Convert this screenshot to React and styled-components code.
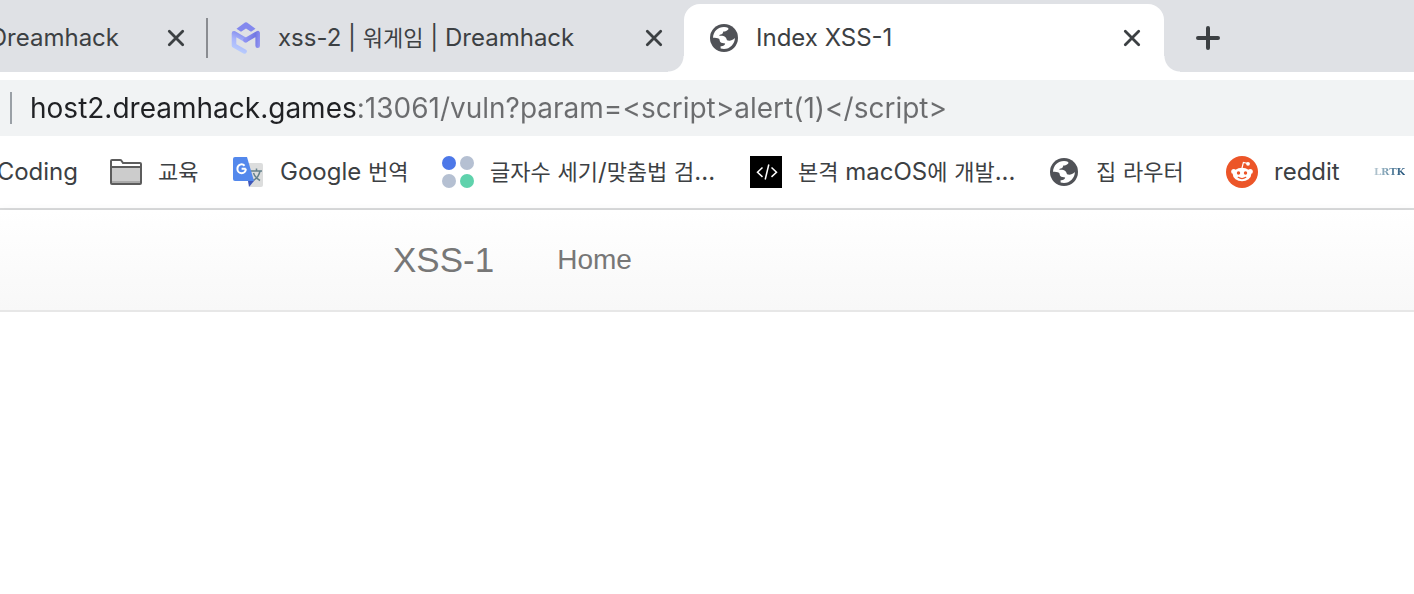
import React from "react";
import styled, { createGlobalStyle } from "styled-components";

const GlobalStyle = createGlobalStyle`
  *, *::before, *::after { box-sizing: border-box; }
  body {
    margin: 0;
    background: #fff;
    color: #3c4043;
    font-family: Inter, "Noto Sans CJK KR", sans-serif;
    font-size: 24px;
  }
  button, input { font: inherit; }
  a { color: inherit; text-decoration: none; }
`;

const Window = styled.div`
  overflow-x: clip;
`;

const TabStrip = styled.div`
  display: flex;
  height: 72px;
  padding-top: 4px;
  background: #dfe1e5;
`;

const Tab = styled.div`
  position: relative;
  display: flex;
  align-items: center;
  flex: 0 0 ${(p) => p.$width}px;
  min-width: 0;
  gap: 16px;
  padding: 0 ${(p) => (p.$active ? 20 : 18)}px 0 ${(p) => (p.$cut ? 0 : 24)}px;
  background: ${(p) => (p.$active ? "#fff" : "transparent")};
  border-radius: 16px 16px 0 0;

  ${(p) =>
    p.$active &&
    `
    &::before, &::after {
      content: "";
      position: absolute;
      bottom: 0;
      width: 16px;
      height: 16px;
    }
    &::before {
      right: 100%;
      background: radial-gradient(circle at 0 0, transparent 15px, #fff 16px);
    }
    &::after {
      left: 100%;
      background: radial-gradient(circle at 100% 0, transparent 15px, #fff 16px);
    }
  `}
`;

const Divider = styled.span`
  position: absolute;
  left: 0;
  width: 2px;
  height: 40px;
  background: #8a8c91;
`;

const TabTitle = styled.span`
  display: flex;
  flex: 1;
  min-width: 0;
  justify-content: ${(p) => (p.$cut ? "flex-end" : "flex-start")};
  padding-right: ${(p) => (p.$cut ? 29 : 0)}px;
  overflow: hidden;
  white-space: pre;
  line-height: 32px;
`;

const Hangul = styled.span`
  font-size: 22px;
`;

const IconButton = styled.button`
  display: flex;
  flex: none;
  align-items: center;
  justify-content: center;
  width: ${(p) => p.$size}px;
  height: ${(p) => p.$size}px;
  padding: 0;
  border: 0;
  background: none;
  color: #3c4043;
`;

const NewTabArea = styled.div`
  display: flex;
  align-items: center;
  padding-left: 28px;
`;

const AddressRow = styled.form`
  display: flex;
  align-items: center;
  height: 56px;
  margin-top: 8px;
  padding-left: 10px;
  background: #f1f3f4;
`;

const AddressRule = styled.span`
  width: 2px;
  height: 32px;
  margin-right: 18px;
  background: #9aa0a6;
`;

const AddressInput = styled.input`
  flex: 1;
  min-width: 0;
  height: 40px;
  padding: 0;
  border: 0;
  outline: 0;
  font-size: 28px;
  color: #5f6368;
  -webkit-text-fill-color: transparent;
  background: linear-gradient(to right, #202124 327px, #6b6c6e 327px);
  -webkit-background-clip: text;
  background-clip: text;
`;

const BookmarkBar = styled.nav`
  display: flex;
  align-items: center;
  gap: 32px;
  height: 74px;
  border-bottom: 2px solid #dadbdc;
`;

const Bookmark = styled.a`
  display: flex;
  flex: none;
  align-items: center;
  gap: 16px;
`;

const BookmarkLabel = styled.span`
  display: flex;
  width: ${(p) => p.$width}px;
  justify-content: ${(p) => (p.$cut ? "flex-end" : "flex-start")};
  white-space: pre;
  line-height: 32px;
`;

const SiteNav = styled.nav`
  display: flex;
  align-items: center;
  gap: 63px;
  height: 102px;
  padding-left: 393px;
  border-bottom: 2px solid #e7e7e7;
  background: linear-gradient(#fff, #f8f8f8);
  box-shadow: 0 2px 10px rgba(0, 0, 0, 0.075);
  color: #777;
  font-family: "Liberation Sans", Arial, sans-serif;
`;

const SiteLink = styled.a`
  font-size: ${(p) => (p.$brand ? 35 : 28)}px;
  line-height: 40px;
`;

const CloseIcon = () => (
  <svg width="18" height="18" viewBox="0 0 18 18" stroke="currentColor" strokeWidth="2.800" strokeLinecap="round" aria-hidden="true">
    <path d="M2.300 2.300l13.400 13.400M15.700 2.300l-13.400 13.400" />
  </svg>
);

const PlusIcon = () => (
  <svg width="24" height="24" viewBox="0 0 24 24" stroke="currentColor" strokeWidth="4" strokeLinecap="round" aria-hidden="true">
    <path d="M12 2v20M2 12h20" />
  </svg>
);

const GlobeIcon = () => (
  <svg width="32" height="32" viewBox="0 0 32 32" aria-hidden="true">
    <circle cx="16" cy="16" r="14" fill="#505257" />
    <path
      fill="#fff"
      d="M5 15.700C5.200 9.500 10 5 16 5c1.600 0 3 .3 4.300.9V7.500c-1.200 1.300-2.800 2-5 2.100-.3 1.500-.8 2.500-1.800 2.700-1.300.2-2 .5-2.200 1.500 2.600-.2 4.800.1 6.200 1.400.9.900 1.200 2 1.500 3.100 2.300.7 5.200.5 7.900-2.300C26.800 22 22 27 16 27c-1.200 0-2.400-.2-3.400-.5v-2.300c2.300.2 4.200-.6 4.600-2.700-1.600-.4-3.900-.2-4.900-1.500-.7-1-.4-2.300-1.300-3.300-1.500-.9-3.700-1-6-1z"
    />
  </svg>
);

const DreamhackIcon = () => (
  <svg width="32" height="32" viewBox="0 0 32 32" fill="none" aria-hidden="true">
    <defs>
      <linearGradient id="dhLeft" x1="16" y1="10" x2="8" y2="30" gradientUnits="userSpaceOnUse">
        <stop offset="0" stopColor="#7d84ea" />
        <stop offset=".5" stopColor="#a9b5fb" />
        <stop offset="1" stopColor="#b9cdfd" />
      </linearGradient>
      <linearGradient id="dhRight" x1="16" y1="18" x2="30" y2="20" gradientUnits="userSpaceOnUse">
        <stop offset="0" stopColor="#8d92f1" />
        <stop offset=".6" stopColor="#7177e2" />
        <stop offset="1" stopColor="#9496f2" />
      </linearGradient>
    </defs>
    <path d="M6.500 6.800L15 .6q1-.6 2 0l8.500 6.200-4.500 3-5-3.400-5 3.400z" fill="#8388ee" />
    <path d="M14.500 29.400L4 23.600V11.200l12 7" stroke="url(#dhLeft)" strokeWidth="4.600" strokeLinejoin="round" strokeLinecap="round" />
    <path d="M15.500 18.200l12.200-7v12.600" stroke="url(#dhRight)" strokeWidth="4.600" strokeLinejoin="round" strokeLinecap="round" />
  </svg>
);

const FolderIcon = () => (
  <svg width="32" height="32" viewBox="0 0 32 32" aria-hidden="true">
    <path d="M1 27V5q0-1 1-1h8q1 0 1.500.8L13 7h17q1 0 1 1v19q0 1-1 1H2q-1 0-1-1z" fill="#fff" stroke="#5c5c5c" strokeWidth="2" />
    <path d="M2 11h28v16H2z" fill="#ccc" />
    <path d="M2 25h28v2H2z" fill="#aaa" />
    <path d="M1 11h30" stroke="#5c5c5c" strokeWidth="2" />
  </svg>
);

const TranslateIcon = () => (
  <svg width="32" height="32" viewBox="0 0 32 32" aria-hidden="true">
    <path d="M11 7h18q2 0 2 2v20q0 2-2 2H18z" fill="#dcdddd" />
    <path d="M19 15h11M24.500 12.500V15M28 15c-1 5-4 8-7 9.500M21.500 17c1 3 4 6 6.500 7.500" stroke="#63808b" strokeWidth="1.500" fill="none" />
    <path d="M16 25h6l-5 6z" fill="#3f57ba" />
    <path d="M3 1h12l7 24H3q-2 0-2-2V3q0-2 2-2z" fill="#5388ec" />
    <path d="M13.800 12.700H9.600M13.800 12.700c.2 6.200-8.400 5.800-8.400.2 0-4.700 4.800-5.600 7.200-3.200" stroke="#fff" strokeWidth="2" fill="none" />
  </svg>
);

const DotsIcon = () => (
  <svg width="32" height="32" viewBox="0 0 32 32" aria-hidden="true">
    <circle cx="7" cy="7" r="7" fill="#4d78e8" />
    <circle cx="25" cy="7" r="7" fill="#b5c0d2" />
    <circle cx="7" cy="25" r="7" fill="#b5c0d2" />
    <circle cx="25" cy="25" r="7" fill="#5fd2ac" />
  </svg>
);

const CodeIcon = () => (
  <svg width="32" height="32" viewBox="0 0 32 32" aria-hidden="true">
    <path d="M0 0h32v32H0z" fill="#000" />
    <path d="M12.500 11.500L7.500 16.200l5 4.700M21.500 11.500l5 4.700-5 4.700M18.800 8.500l-3.600 15" stroke="#fff" strokeWidth="1.500" fill="none" />
  </svg>
);

const RedditIcon = () => (
  <svg width="32" height="32" viewBox="0 0 32 32" aria-hidden="true">
    <circle cx="16" cy="16" r="16" fill="#ec5528" />
    <path d="M16 12l1.400-5.600 4.600 1.100" stroke="#fff" strokeWidth="1.200" fill="none" />
    <circle cx="22" cy="7.800" r="1.900" fill="#fff" />
    <circle cx="7.700" cy="15.400" r="2.500" fill="#fff" />
    <circle cx="24.300" cy="15.400" r="2.500" fill="#fff" />
    <ellipse cx="16" cy="18.500" rx="9.200" ry="6.800" fill="#fff" />
    <circle cx="12.500" cy="17" r="1.700" fill="#ec5528" />
    <circle cx="19.500" cy="17" r="1.700" fill="#ec5528" />
    <path d="M12.200 21.300q3.800 2.500 7.600 0" stroke="#ec5528" strokeWidth="1.200" fill="none" strokeLinecap="round" />
  </svg>
);

const LrtkMark = styled.span`
  font: bold 10px/32px "DejaVu Serif", serif;
  background: linear-gradient(to right, #b9c9d2, #7d9fb3 40%, #1d4f78);
  -webkit-background-clip: text;
  background-clip: text;
  -webkit-text-fill-color: transparent;
`;

const tabs = [
  { title: "Dreamhack", width: 206, cut: true },
  { title: "xss-2 | 워게임 | Dreamhack", width: 478, icon: DreamhackIcon, divider: true },
  { title: "Index XSS-1", width: 480, icon: GlobeIcon, active: true },
];

const bookmarks = [
  { label: "Coding", width: 78, cut: true },
  { label: "교육", width: 42, icon: FolderIcon },
  { label: "Google 번역", width: 130, icon: TranslateIcon },
  { label: "글자수 세기/맞춤법 검...", width: 228, icon: DotsIcon },
  { label: "본격 macOS에 개발...", width: 218, icon: CodeIcon },
  { label: "집 라우터", width: 98, icon: GlobeIcon },
  { label: "reddit", width: 68, icon: RedditIcon },
];

// Hangul fills its em box, so it is set a step smaller than the Latin beside it.
const MixedText = ({ children }) => (
  <span>
    {children
      .split(/([가-힣]+)/)
      .map((part, i) => (i % 2 ? <Hangul key={i} lang="ko">{part}</Hangul> : part))}
  </span>
);

export default function App() {
  return (
    <Window>
      <GlobalStyle />
      <TabStrip>
        {tabs.map(({ title, width, icon: Icon, cut, divider, active }) => (
          <Tab key={title} $width={width} $cut={cut} $active={active}>
            {divider && <Divider />}
            {Icon && <Icon />}
            <TabTitle $cut={cut}>
              <MixedText>{title}</MixedText>
            </TabTitle>
            <IconButton type="button" $size={24} aria-label={`Close ${title}`}>
              <CloseIcon />
            </IconButton>
          </Tab>
        ))}
        <NewTabArea>
          <IconButton type="button" $size={32} aria-label="New tab">
            <PlusIcon />
          </IconButton>
        </NewTabArea>
      </TabStrip>
      <AddressRow>
        <AddressRule />
        <AddressInput
          type="text"
          aria-label="Address"
          defaultValue="host2.dreamhack.games:13061/vuln?param=<script>alert(1)</script>"
        />
      </AddressRow>
      <BookmarkBar aria-label="Bookmarks">
        {bookmarks.map(({ label, width, icon: Icon, cut }) => (
          <Bookmark key={label} href="#">
            {Icon && <Icon />}
            <BookmarkLabel $width={width} $cut={cut}>
              <MixedText>{label}</MixedText>
            </BookmarkLabel>
          </Bookmark>
        ))}
        <Bookmark href="#">
          <LrtkMark>LRTK</LrtkMark>
        </Bookmark>
      </BookmarkBar>
      <SiteNav aria-label="Site">
        <SiteLink href="#" $brand>
          XSS-1
        </SiteLink>
        <SiteLink href="#">Home</SiteLink>
      </SiteNav>
    </Window>
  );
}
